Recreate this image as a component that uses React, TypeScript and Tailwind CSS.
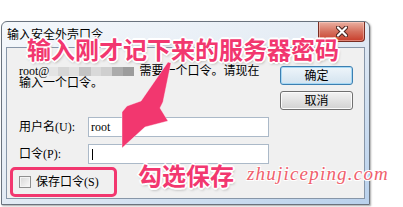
export default function App() {
  const dlgFont = "font-['Liberation_Serif','Noto_Sans_CJK_SC',serif]";
  const mosaic = [
    "w-[9px] bg-[#e4e4e4]",
    "w-[11px] bg-[#d6d6d6]",
    "w-[10px] bg-[#e0e0e0]",
    "w-[12px] bg-[#c4c4c4]",
    "w-[10px] bg-[#d9d9d9]",
    "w-[11px] bg-[#cfcfcf]",
    "w-[11px] bg-[#ababab]",
    "w-[11px] bg-[#9c9c9c]",
  ];
  return (
    <div className="relative w-[403px] h-[207px] overflow-hidden bg-white pt-[21px] pl-px">
      {/* Dialog window */}
      <div className="flex flex-col w-[369px] h-[184px] rounded-t-[6px] border border-[#6a737e] bg-gradient-to-br from-[#f5f8fb] via-[#e3ebf4] to-[#b9d1ec] shadow-[1px_1px_2px_rgba(0,0,0,0.35)]">
        {/* Title bar */}
        <div className="flex h-[25px] items-center pl-[5px] pr-[4px]">
          <span className={`${dlgFont} text-[12px] leading-[12px] text-black`}>输入安全外壳口令</span>
          <div className="ml-auto self-start flex h-[20px] w-[47px] items-center justify-center rounded-b-[4px] border border-t-0 border-[#7a2d22] bg-gradient-to-b from-[#eab0a2] via-[#d5705e] to-[#c73a28] shadow-[inset_0_0_0_1px_rgba(255,220,210,0.45)]">
            <svg width="12" height="11" viewBox="0 0 12 11">
              <path d="M2 1.5 L10 9.5 M10 1.5 L2 9.5" stroke="#4a2620" strokeWidth="4.2" strokeLinecap="round" />
              <path d="M2 1.5 L10 9.5 M10 1.5 L2 9.5" stroke="#ffffff" strokeWidth="2.2" strokeLinecap="round" />
            </svg>
          </div>
        </div>
        {/* Client area */}
        <div className={`${dlgFont} mx-[4px] flex h-[152px] flex-col border border-[#8796a8] bg-[#f0f0f0] pl-[12px] pr-[11px] pt-[17px] text-[12px] text-black`}>
          <div className="flex items-start justify-between">
            <div className="leading-[12px]">
              <div className="flex items-center whitespace-nowrap">
                <span>root@</span>
                <span className="inline-flex h-[9px]">
                  {mosaic.map((m, i) => (
                    <span key={i} className={`h-full ${m}`} />
                  ))}
                </span>
                <span className="ml-[5px]">需要一个口令。请现在</span>
              </div>
              <div>输入一个口令。</div>
            </div>
            <div className="mt-px flex flex-col gap-[6px]">
              <div className="flex h-[19px] w-[73px] items-center justify-center rounded-[3px] border border-[#3c7fb1] bg-gradient-to-b from-[#eef5fa] to-[#d3e3ef] shadow-[inset_0_0_0_1px_#a6d8f4] leading-none">
                确定
              </div>
              <div className="flex h-[19px] w-[73px] items-center justify-center rounded-[3px] border border-[#707070] bg-gradient-to-b from-[#f3f3f3] to-[#d2d2d2] shadow-[inset_0_0_0_1px_#fbfbfb] leading-none">
                取消
              </div>
            </div>
          </div>
          <div className="mt-[7px] flex items-center">
            <span className="w-[69px] leading-none">用户名(U):</span>
            <div className="flex h-[20px] w-[181px] items-center border border-[#abb9c8] bg-white pl-[2px] leading-none">
              root
            </div>
          </div>
          <div className="mt-[7px] flex items-center">
            <span className="w-[69px] leading-none">口令(P):</span>
            <div className="flex h-[20px] w-[181px] items-center border border-[#abb9c8] bg-white pl-[3px]">
              <span className="h-[11px] w-px bg-black" />
            </div>
          </div>
          <div className="mt-[11px] flex h-[13px] items-center gap-[5px]">
            <span className="h-[12px] w-[12px] border border-[#8e8f8f] bg-gradient-to-br from-[#d6d6d6] to-[#fafafa] shadow-[inset_0_0_0_1px_#f4f4f4]" />
            <span className="leading-none">保存口令(S)</span>
          </div>
        </div>
      </div>

      {/* Annotation overlays */}
      <div className="pointer-events-none absolute left-[10px] top-[167px] h-[30px] w-[107px] rounded-[5px] border-[3px] border-[#f2376f]" />
      <svg className="pointer-events-none absolute left-0 top-0" width="403" height="207" viewBox="0 0 403 207">
        <polygon
          points="168,62 171,63 163,102 160,108 168,121 145,127 122,148 122,112 127,106 141,101"
          fill="#f2376f"
          stroke="#ffffff"
          strokeOpacity="0.5"
          strokeWidth="0.8"
          strokeLinejoin="round"
        />
      </svg>
      <div className="pointer-events-none absolute left-[27px] top-[36px] whitespace-nowrap font-['Noto_Sans_CJK_SC',sans-serif] text-[24px] font-bold leading-[26px] text-[#f2376f] [text-shadow:1px_1px_0_#fff,-1px_-1px_0_#fff,1px_-1px_0_#fff,-1px_1px_0_#fff,2px_0_0_#fff,-2px_0_0_#fff,0_2px_0_#fff,0_-2px_0_#fff,1px_2px_3px_rgba(0,0,0,0.35)]">
        输入刚才记下来的服务器密码
      </div>
      <div className="pointer-events-none absolute left-[138px] top-[162px] whitespace-nowrap font-['Noto_Sans_CJK_SC',sans-serif] text-[24px] font-bold leading-[26px] text-[#f2376f] [text-shadow:1px_1px_0_#fff,-1px_-1px_0_#fff,1px_-1px_0_#fff,-1px_1px_0_#fff,2px_0_0_#fff,-2px_0_0_#fff,0_2px_0_#fff,0_-2px_0_#fff,1px_2px_3px_rgba(0,0,0,0.35)]">
        勾选保存
      </div>
      <div className="pointer-events-none absolute left-[247px] top-[163px] whitespace-nowrap font-['Liberation_Serif',serif] text-[19px] italic leading-[22px] tracking-[1.2px] text-[#f0606c] [text-shadow:1px_1px_0_#fff,-1px_-1px_0_#fff,1px_-1px_0_#fff,-1px_1px_0_#fff]">
        zhujiceping.com
      </div>
    </div>
  );
}
